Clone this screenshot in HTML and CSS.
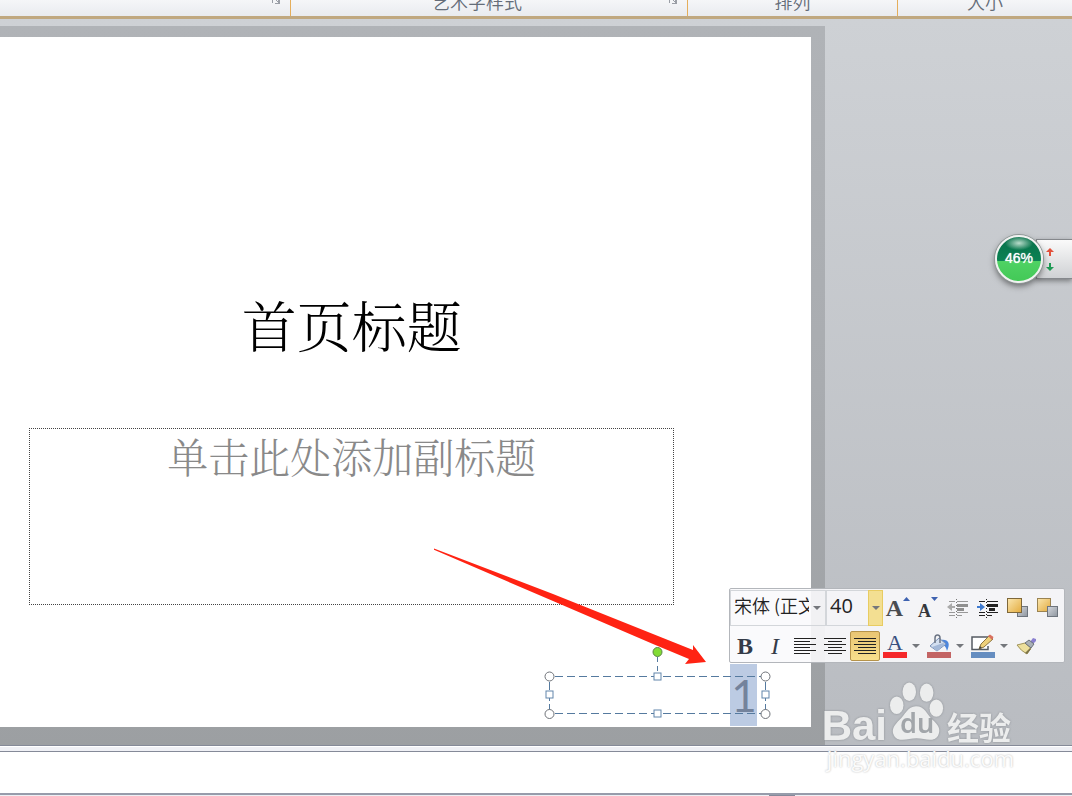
FILE: index.html
```html
<!DOCTYPE html>
<html lang="zh-CN">
<head>
    <meta charset="UTF-8">
    <meta name="viewport" content="width=device-width, initial-scale=1.0">
    <title>首页标题</title>
    <link rel="stylesheet" href="styles.css">
</head>
<body>
    <header class="ribbon">
        <div class="group">
            <span class="group-name"></span>
            <button class="launcher" aria-label="更多"><svg width="10" height="8" viewBox="0 0 10 8"><path d="M1.500 3V0M5 0l2 2" /><path class="corner" d="M9 0V4H4V3H7V0Z" /></svg></button>
        </div>
        <div class="group">
            <span class="group-name">艺术字样式</span>
            <button class="launcher" aria-label="更多"><svg width="10" height="8" viewBox="0 0 10 8"><path d="M1.500 3V0M5 0l2 2" /><path class="corner" d="M9 0V4H4V3H7V0Z" /></svg></button>
        </div>
        <div class="group"><span class="group-name">排列</span></div>
        <div class="group"><span class="group-name">大小</span></div>
    </header>

    <main class="workspace">
        <div class="slide-frame">
            <section class="slide">
                <h1 class="title">首页标题</h1>
                <p class="subtitle">单击此处添加副标题</p>
                <div class="page-number">
                    <span class="number">1</span>
                    <svg class="handles" width="228" height="72" viewBox="0 0 228 72">
                        <g class="dashes">
                            <path d="M12 31.500H222M12 68.500H222" stroke-dasharray="8 4" />
                            <path d="M6.500 37V66M222.500 37V66" stroke-dasharray="8 3" />
                            <path d="M114.500 12V27" stroke-dasharray="5 4" />
                        </g>
                        <g class="squares">
                            <rect x="111" y="28" width="7" height="7" />
                            <rect x="111" y="65" width="7" height="7" />
                            <rect x="3" y="46" width="7" height="7" />
                            <rect x="219" y="46" width="7" height="7" />
                        </g>
                        <g class="rounds">
                            <circle cx="6.500" cy="31.500" r="4.500" />
                            <circle cx="222.500" cy="31.500" r="4.500" />
                            <circle cx="6.500" cy="69" r="4.500" />
                            <circle cx="222.500" cy="69" r="4.500" />
                            <circle class="rotate" cx="114.500" cy="7" r="4.500" />
                        </g>
                    </svg>
                </div>
            </section>
        </div>

        <svg class="arrow" width="274" height="118" viewBox="0 0 274 118">
            <path d="M1 0.500L120 46L225 88L260 102L260 97L273 114L252 116L256 111L220 96L120 53L1 1.800Z" />
        </svg>

        <aside class="speed">
            <div class="ball">46%</div>
            <div class="net">
                <svg width="8" height="24" viewBox="0 0 8 24">
                    <path fill="#e2513b" d="M4 0L8 4H5V8H3V4H0Z" />
                    <path fill="#1f9a55" d="M3 15H5V19H8L4 23L0 19H3Z" />
                </svg>
            </div>
        </aside>

        <!-- floating format toolbar -->
        <div class="toolbar">
            <div class="row row-top">
                <div class="combo combo-font">
                    <select aria-label="字体"><option>宋体 (正文)</option></select>
                    <svg class="caret" width="8" height="5" viewBox="0 0 8 5"><path d="M0 0H8L4 4Z" /></svg>
                </div>
                <div class="combo combo-size">
                    <select aria-label="字号"><option>40</option></select>
                    <span class="drop"><svg class="caret" width="8" height="5" viewBox="0 0 8 5"><path d="M0 0H8L4 4Z" /></svg></span>
                </div>
                <button class="tool letter grow" aria-label="增大字号">A<svg width="7" height="4" viewBox="0 0 7 4"><path fill="#3e62b0" d="M0 4L3.500 0L7 4Z" /></svg></button>
                <button class="tool letter shrink" aria-label="减小字号">A<svg width="7" height="4" viewBox="0 0 7 4"><path fill="#3e62b0" d="M0 0H7L3.500 4Z" /></svg></button>
                <button class="tool" aria-label="减少缩进">
                    <svg width="22" height="20" viewBox="0 0 22 20">
                        <path d="M2 3.500H8M2 14.500H8M2 17.500H8M10 3.500H21M10 14.500H21M10 17.500H15" stroke="#999" />
                        <path d="M9.500 1V20" stroke="#777" stroke-dasharray="1 2" />
                        <path d="M10 6H21V9H10ZM10 10H17V13H10Z" fill="#8f8f8f" />
                        <path d="M0 9L5 5V8H8V10H5V13Z" fill="#aaa" />
                    </svg>
                </button>
                <button class="tool" aria-label="增加缩进">
                    <svg width="22" height="20" viewBox="0 0 22 20">
                        <path d="M2 3.500H8M2 14.500H8M2 17.500H8M10 3.500H21M10 14.500H21M10 17.500H15" stroke="#222" />
                        <path d="M9.500 1V20" stroke="#222" stroke-dasharray="1 2" />
                        <path d="M10 6H21V9H10ZM12 10H18V13H12Z" fill="#222" />
                        <path d="M8 9L3 5V8H0V10H3V13Z" fill="#3f7bd0" />
                    </svg>
                </button>
                <button class="tool" aria-label="上移一层">
                    <svg width="22" height="20" viewBox="0 0 22 20">
                        <defs>
                            <linearGradient id="gold" x1="0" y1="0" x2="1" y2="1"><stop offset="0" stop-color="#fbe7b0" /><stop offset="1" stop-color="#e3ab3e" /></linearGradient>
                            <linearGradient id="steel" x1="0" y1="0" x2="1" y2="1"><stop offset="0" stop-color="#d5d9df" /><stop offset="1" stop-color="#8e959f" /></linearGradient>
                        </defs>
                        <rect x="10.500" y="8.500" width="10" height="10" fill="url(#steel)" stroke="#6d747e" />
                        <rect x="0.500" y="0.500" width="14" height="14" fill="url(#gold)" stroke="#7e673a" />
                    </svg>
                </button>
                <button class="tool" aria-label="下移一层">
                    <svg width="22" height="20" viewBox="0 0 22 20">
                        <rect x="0.500" y="0.500" width="13" height="13" fill="url(#gold)" stroke="#9a8352" />
                        <rect x="10.500" y="8.500" width="10" height="10" fill="url(#steel)" stroke="#6d747e" />
                    </svg>
                </button>
            </div>
            <div class="row">
                <button class="tool letter bold" aria-label="加粗">B</button>
                <button class="tool letter italic" aria-label="倾斜">I</button>
                <button class="tool" aria-label="左对齐">
                    <svg class="lines" width="22" height="18" viewBox="0 0 22 18"><path d="M0 1.500H22M0 4.500H16M0 7.500H22M0 10.500H16M0 13.500H22M0 16.500H16" /></svg>
                </button>
                <button class="tool" aria-label="居中">
                    <svg class="lines" width="22" height="18" viewBox="0 0 22 18"><path d="M0 1.500H22M4 4.500H18M0 7.500H22M4 10.500H18M0 13.500H22M4 16.500H18" /></svg>
                </button>
                <button class="tool active" aria-label="右对齐">
                    <svg class="lines" width="22" height="18" viewBox="0 0 22 18"><path d="M0 1.500H22M4 4.500H22M0 7.500H22M4 10.500H22M0 13.500H22M4 16.500H22" /></svg>
                </button>
                <button class="tool split" aria-label="字体颜色">
                    <span class="swatch swatch-red">A</span>
                    <svg class="caret" width="8" height="5" viewBox="0 0 8 5"><path d="M0 0H8L4 4Z" /></svg>
                </button>
                <button class="tool split" aria-label="形状填充">
                    <span class="swatch swatch-rose">
                        <svg width="24" height="18" viewBox="0 0 24 18">
                            <path d="M14 6C21 5 24 9 20 17C19 13 18 11 15 12Z" fill="#4d86dc" />
                            <path d="M3 12L12 4L19 10L10 17Z" fill="#d3dff0" stroke="#7a92b8" />
                            <path d="M5 13L16 9L18 10L10 17Z" fill="#a3b8d8" />
                            <path d="M8 9V4Q8 1 10.500 1Q13 1 13 4V9" fill="none" stroke="#6b7484" stroke-width="1.500" />
                        </svg>
                    </span>
                    <svg class="caret" width="8" height="5" viewBox="0 0 8 5"><path d="M0 0H8L4 4Z" /></svg>
                </button>
                <button class="tool split" aria-label="形状轮廓">
                    <span class="swatch swatch-blue">
                        <svg width="24" height="18" viewBox="0 0 24 18">
                            <path d="M17 3H1V15.500H17V12" fill="#fff" stroke="#555b63" stroke-width="1.500" />
                            <path d="M8 15L10 10L18 2L22 5L13 13Z" fill="#eed07a" stroke="#8d7540" />
                            <path d="M17 2L19 0.500L22.500 3L21 6Z" fill="#d9705f" />
                            <path d="M8 15L9 12L11 14Z" fill="#444" />
                        </svg>
                    </span>
                    <svg class="caret" width="8" height="5" viewBox="0 0 8 5"><path d="M0 0H8L4 4Z" /></svg>
                </button>
                <button class="tool" aria-label="格式刷">
                    <svg width="22" height="20" viewBox="0 0 22 20">
                        <path d="M14 6L17 2L20 3L20 5L17 8Z" fill="#8a80d0" />
                        <path d="M1 9L9 7L15 12L11 18Q5 15 1 9Z" fill="#ecdf9c" stroke="#a1945c" />
                        <path d="M9 17L14 12L15 13L11 18Z" fill="#7d7448" />
                        <path d="M9 7L13 4L18 8L15 12Z" fill="#a9b0b7" stroke="#6b727a" />
                    </svg>
                </button>
            </div>
        </div>
    </main>

    <div class="splitter"></div>
    <div class="notes"></div>
    <footer class="status"><span class="grip"></span></footer>

    <div class="watermark">
        <div class="brand">
            <span>Bai</span>
            <span class="paw">
                <svg width="56" height="60" viewBox="0 0 58 62">
                    <ellipse cx="8" cy="24" rx="7" ry="9" />
                    <ellipse cx="21" cy="10" rx="7" ry="9.500" />
                    <ellipse cx="39" cy="11" rx="7" ry="9.500" />
                    <ellipse cx="49" cy="27" rx="7" ry="9" />
                    <path d="M28 25C37 25 39 33 45 39C51 44 54 49 51 55C48 61 41 60 36 59C31 58 26 58 21 59C15 60 8 61 5 55C2 49 6 44 11 39C17 34 19 25 28 25Z" />
                </svg>
                <span class="du">du</span>
            </span>
            <span class="jingyan">经验</span>
        </div>
        <div class="site">jingyan.baidu.com</div>
    </div>
</body>
</html>
```
FILE: styles.css
```css
*{
    box-sizing: border-box;
}
body{
    margin: 0;
    min-height: 100vh;
    display: flex;
    flex-direction: column;
    position: relative;
    overflow: hidden;
    font-family: "Liberation Sans", "Noto Sans CJK SC", sans-serif;
    background-color: #fff;
}
button,
select{
    border: 0;
    margin: 0;
    padding: 0;
    background: none;
    font: inherit;
    color: inherit;
}
svg{
    display: block;
    flex: none;
}

/* ribbon */
.ribbon{
    height: 19px;
    display: grid;
    grid-template-columns: 291fr 397fr 210fr 174fr;
    background: linear-gradient(#f5f6f8, #e9ebef);
    border-bottom: 3px solid #c0a880;
    overflow: hidden;
}
.group{
    display: flex;
    align-items: flex-end;
    height: 16px;
    border-right: 1px solid #e5ae5b;
}
.group:last-child{
    border-right: 0;
}
.group-name{
    flex: 1;
    text-align: center;
    font-size: 18px;
    line-height: 30px;
    color: #646c78;
    font-family: "Noto Sans CJK SC", sans-serif;
    font-weight: 350;
}
.launcher{
    width: 24px;
    height: 16px;
    display: flex;
    align-items: flex-start;
    padding-left: 5px;
}
.launcher path{
    fill: none;
    stroke: #9a9ea6;
}
.launcher .corner{
    fill: #9a9ea6;
    stroke: none;
}

/* workspace */
.workspace{
    flex: 1;
    display: flex;
    align-items: stretch;
    position: relative;
    padding-top: 7px;
    background: linear-gradient(#ced1d5, #b9bcc1);
}
.slide-frame{
    width: 77%;
    display: flex;
    padding: 11px 14px 18px 0;
    background: linear-gradient(#b0b3b7, #a9acb0 50%, #9c9fa2);
}
.slide{
    flex: 1;
    display: flex;
    flex-direction: column;
    padding: 255px 46px 12px 29px;
    background-color: #fff;
}
.title,
.subtitle{
    margin: 0 91px 0 0;
    text-align: center;
    font-family: "Noto Serif CJK SC", "Noto Sans CJK SC", serif;
    font-weight: 300;
}
.title{
    font-size: 55px;
    line-height: 64px;
    color: #000;
}
.subtitle{
    height: 177px;
    margin-top: 72px;
    border: 1px dotted #444;
    font-size: 41px;
    line-height: 54px;
    color: #898989;
}
.page-number{
    align-self: flex-end;
    width: 216px;
    height: 38px;
    margin-top: 71px;
    padding-right: 8px;
    display: flex;
    align-items: center;
    justify-content: flex-end;
    position: relative;
}
.number{
    width: 27px;
    text-align: center;
    font-family: Lato, sans-serif;
    font-size: 44px;
    line-height: 62px;
    color: #74839c;
    background-color: #bccbe3;
}
.handles{
    position: absolute;
    left: -6px;
    top: -31px;
    overflow: visible;
}
.dashes path{
    stroke: #557a9f;
    fill: none;
}
.squares rect{
    fill: #fff;
    stroke: #6286ab;
}
.rounds circle{
    fill: #fff;
    stroke: #6f7379;
}
.rounds .rotate{
    fill: #82dc35;
    stroke: #5c8546;
}
.arrow{
    position: absolute;
    left: 433px;
    top: 529px;
}
.arrow path{
    fill: #ff2313;
}

/* speed ball */
.speed{
    position: absolute;
    right: 0;
    top: 216px;
    display: flex;
    align-items: center;
}
.ball{
    width: 48px;
    height: 48px;
    border: 2px solid #f0f2f1;
    border-radius: 50%;
    background: radial-gradient(ellipse 14px 7px at 50% 14%, #b9dccb 0, rgba(255, 255, 255, 0) 100%), linear-gradient(#08704a 0, #0b8253 54%, #4fd264 55%, #43c957 100%);
    box-shadow: 0 0 0 1px #8f9796, 0 3px 6px rgba(0, 0, 0, 0.5);
    color: #fff;
    font-size: 14px;
    line-height: 43px;
    text-align: center;
    text-shadow: 0 0 1px #fff;
    z-index: 1;
}
.net{
    width: 36px;
    height: 40px;
    margin-left: -7px;
    padding: 8px 0 0 9px;
    border: 1px solid #85888c;
    border-right: 0;
    background: linear-gradient(#fafafa, #cfd1d4);
    box-shadow: 0 2px 5px rgba(0, 0, 0, 0.4);
}

/* floating toolbar */
.toolbar{
    position: absolute;
    right: 7px;
    top: 569px;
    width: 336px;
    padding: 1px 0;
    border: 1px solid #b3b6bb;
    border-radius: 2px;
    background-color: rgba(249, 250, 252, 0.9);
}
.row{
    display: flex;
    height: 30px;
}
.row-top{
    height: 36px;
    margin-bottom: 5px;
    align-items: center;
}
.combo{
    height: 36px;
    display: flex;
    align-items: center;
    border: 1px solid #d3d6da;
    color: #222;
    font-family: "Noto Sans CJK SC", sans-serif;
    font-size: 18px;
    font-weight: 350;
}
.combo select{
    appearance: none;
    height: 34px;
    padding: 0 0 6px 3px;
    overflow: hidden;
    text-overflow: clip;
}
.combo-font{
    width: 96px;
}
.combo-font select{
    width: 78px;
    margin-right: 4px;
}
.combo-size{
    width: 57px;
    border-right: 0;
    font-family: "Open Sans", sans-serif;
    font-size: 20px;
    font-weight: 400;
}
.combo-size select{
    width: 42px;
}
.drop{
    width: 15px;
    height: 36px;
    display: flex;
    align-items: center;
    justify-content: center;
    border: 1px solid #e8cc62;
    background-color: #f3df92;
}
.caret{
    fill: #74777c;
}
.tool{
    width: 30px;
    height: 30px;
    display: flex;
    align-items: center;
    justify-content: center;
}
.letter{
    font-family: "Liberation Serif", serif;
    font-weight: bold;
    font-size: 24px;
    line-height: 30px;
    color: #343b48;
}
.grow,
.shrink{
    align-items: flex-start;
    color: #4a4c50;
}
.grow svg,
.shrink svg{
    margin-top: 4px;
}
.shrink{
    font-size: 18px;
    line-height: 36px;
    color: #33363b;
}
.italic{
    font-style: italic;
    font-weight: normal;
}
.lines path{
    stroke: #222;
}
.active{
    border: 1px solid #b5934a;
    border-radius: 2px;
    background: linear-gradient(#e9c573, #f8df8c);
}
.split{
    width: 44px;
    justify-content: flex-start;
    padding-left: 3px;
    gap: 5px;
}
.swatch{
    width: 24px;
    height: 24px;
    border-bottom: 6px solid;
    color: #3a5080;
    font-family: "Liberation Serif", serif;
    font-size: 22px;
    line-height: 18px;
    text-align: center;
}
.swatch-red{
    border-bottom-color: #f5282a;
}
.swatch-rose{
    border-bottom-color: #c36464;
}
.swatch-blue{
    border-bottom-color: #658dc0;
}

/* notes and status */
.splitter{
    height: 7px;
    border-top: 1px solid #858a98;
    border-bottom: 1px solid #858a98;
    background: linear-gradient(#fff 1px, #eff0f5 1px);
}
.notes{
    height: 41px;
    background-color: #fff;
}
.status{
    height: 3px;
    border-top: 2px solid #979cab;
    display: flex;
    justify-content: flex-end;
    padding-right: 277px;
    background-color: #eef0f4;
}
.grip{
    width: 26px;
    height: 1px;
    background-color: #85899a;
}

.watermark{
    position: absolute;
    right: 58px;
    bottom: 22px;
    color: #eceded;
    pointer-events: none;
}
.brand{
    display: flex;
    align-items: flex-end;
    gap: 2px;
    margin-right: 3px;
    font-size: 42px;
    font-weight: bold;
    line-height: 32px;
    filter: drop-shadow(0 0 1px #8c9095);
}
.paw{
    position: relative;
}
.paw svg{
    fill: #eceded;
}
.du{
    position: absolute;
    left: 11px;
    bottom: 3px;
    font-family: "Noto Sans", sans-serif;
    font-size: 27px;
    font-weight: 600;
    color: #a2a6aa;
}
.jingyan{
    font-family: "Noto Sans CJK SC", sans-serif;
    font-size: 32px;
    font-weight: bold;
}
.site{
    font-family: "Open Sans", sans-serif;
    font-size: 22px;
    line-height: 32px;
    text-align: right;
    color: #fbfbfb;
    text-shadow: 0 0 2px #b5b5b5;
}
```
